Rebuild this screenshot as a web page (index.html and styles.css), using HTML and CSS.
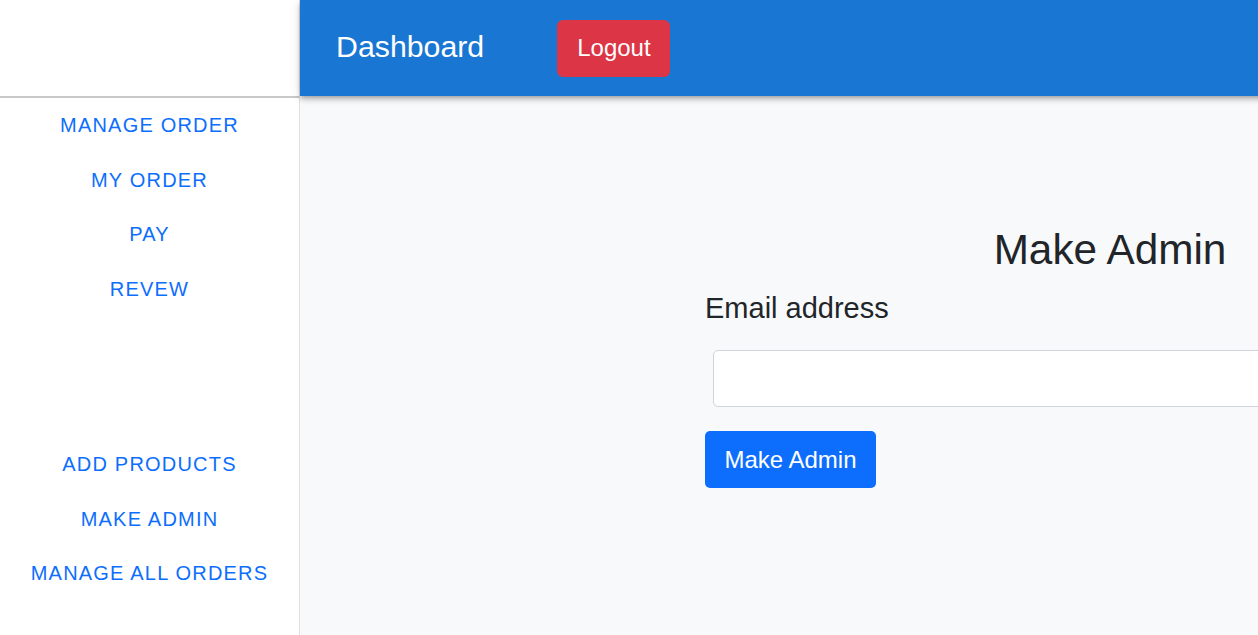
FILE: index.html
```html
<!DOCTYPE html>
<html lang="en">
<head>
<meta charset="utf-8">
<title>Dashboard</title>
<link rel="stylesheet" href="styles.css">
</head>
<body>
<div class="layout">
  <aside class="sidebar">
    <div class="sidebar-spacer"></div>
    <hr class="divider">
    <nav class="nav-group">
      <a class="nav-link" href="#">Manage Order</a>
      <a class="nav-link" href="#">My Order</a>
      <a class="nav-link" href="#">Pay</a>
      <a class="nav-link" href="#">Revew</a>
    </nav>
    <nav class="nav-group nav-admin">
      <a class="nav-link" href="#">Add Products</a>
      <a class="nav-link" href="#">Make Admin</a>
      <a class="nav-link" href="#">Manage All Orders</a>
    </nav>
  </aside>
  <div class="main">
    <header class="appbar">
      <span class="appbar-title">Dashboard</span>
      <button class="btn btn-logout" type="button">Logout</button>
    </header>
    <main class="content">
      <h1 class="page-title">Make Admin</h1>
      <form class="admin-form">
        <label class="form-label" for="email">Email address</label>
        <input class="form-input" id="email" type="email">
        <button class="btn btn-primary" type="button">Make Admin</button>
      </form>
    </main>
  </div>
</div>
</body>
</html>
```

FILE: styles.css
```css
html, body {
  margin: 0;
  padding: 0;
  height: 100%;
  overflow: hidden;
}

body {
  font-family: "Liberation Sans", Arial, sans-serif;
  background: #ffffff;
  color: #212529;
}

.layout {
  display: flex;
  height: 100vh;
}

.sidebar {
  flex: 0 0 299px;
  width: 299px;
  border-right: 1px solid #e0e0e0;
  background: #ffffff;
  display: flex;
  flex-direction: column;
}

.sidebar-spacer {
  height: 96px;
}

.divider {
  margin: 0;
  border: none;
  height: 2px;
  background: #c8c8c8;
}

.nav-group {
  display: flex;
  flex-direction: column;
}

.nav-admin {
  margin-top: 121px;
}

.nav-link {
  display: block;
  height: 54.5px;
  line-height: 54.5px;
  text-align: center;
  font-size: 20px;
  letter-spacing: 1.2px;
  text-transform: uppercase;
  color: #0d6efd;
  text-decoration: none;
}

.main {
  flex: 1 0 auto;
  display: flex;
  flex-direction: column;
  background: #f8f9fa;
}

.appbar {
  position: relative;
  z-index: 2;
  height: 96px;
  flex: 0 0 96px;
  background: #1976d2;
  display: flex;
  align-items: center;
  padding-left: 36px;
  box-shadow: 0 2px 4px -1px rgba(0,0,0,0.2), 0 4px 5px 0 rgba(0,0,0,0.14), 0 1px 10px 0 rgba(0,0,0,0.12);
}

.appbar-title {
  color: #ffffff;
  font-size: 30.3px;
  margin-right: 73px;
  margin-top: -3px;
}

.btn {
  font-family: "Liberation Sans", Arial, sans-serif;
  border: none;
  color: #ffffff;
  font-size: 24px;
  line-height: 36px;
  border-radius: 6px;
  cursor: pointer;
}

.btn-logout {
  background: #dc3545;
  height: 57px;
  padding: 0 19px 0 20px;
}

.content {
  width: 1620px;
  padding-top: 129px;
  display: flex;
  flex-direction: column;
  align-items: center;
}

.page-title {
  margin: 0 0 12px;
  font-weight: 400;
  font-size: 42.3px;
  line-height: 50px;
  color: #212529;
}

.admin-form {
  width: 810px;
  display: flex;
  flex-direction: column;
  align-items: flex-start;
}

.form-label {
  font-size: 29px;
  line-height: 42px;
  color: #212529;
}

.form-input {
  box-sizing: border-box;
  margin: 21px 0 24px 8px;
  width: 800px;
  height: 57px;
  border: 1px solid #ced4da;
  border-radius: 5px;
  background: #ffffff;
}

.btn-primary {
  background: #0d6efd;
  height: 57px;
  width: 171px;
  padding: 0;
  border-radius: 5px;
}
```
